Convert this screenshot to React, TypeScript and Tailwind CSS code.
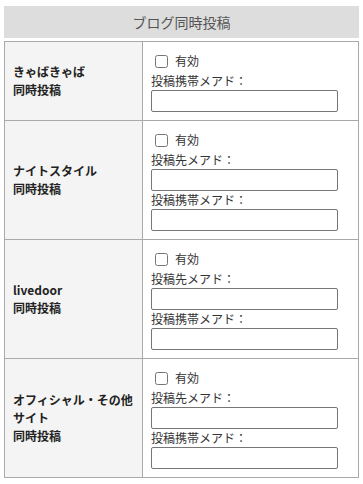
const font = { fontFamily: '"Noto Sans CJK JP", "Noto Sans", sans-serif' }

type Site = {
  name: React.ReactNode
  pcMail: boolean
}

const sites: Site[] = [
  { name: 'きゃばきゃば', pcMail: false },
  { name: 'ナイトスタイル', pcMail: true },
  { name: 'livedoor', pcMail: true },
  { name: 'オフィシャル・その他サイト', pcMail: true },
]

function MailField({ label }: { label: string }) {
  return (
    <>
      <div className="h-[18px] leading-[18px]">{label}</div>
      <input
        type="text"
        className="block w-[187px] h-[22px] border border-[#767676] rounded-[2px] bg-white"
      />
    </>
  )
}

export default function App() {
  return (
    <div className="w-[363px] px-[4px] pt-[6px] text-[12px] text-[#333] bg-white" style={font}>
      <div className="h-[32px] flex items-center justify-center bg-[#dddddd] text-[14px] text-[#555]">
        ブログ同時投稿
      </div>
      <div className="mt-[3px] border-l border-r border-t border-[#aaaaaa]">
        {sites.map((site, i) => (
          <div key={i} className="flex border-b border-[#aaaaaa]">
            <div className="w-[138px] shrink-0 flex items-center px-[8px] bg-[#f4f4f4] border-r border-[#aaaaaa] font-bold text-[#222] leading-[18px]">
              <div>
                {site.name}
                <br />
                同時投稿
              </div>
            </div>
            <div className="flex-1 pl-[8px] py-[8px]">
              <label className="h-[22px] flex items-center">
                <input type="checkbox" className="ml-[4px] w-[13px] h-[13px]" />
                <span className="ml-[7px]">有効</span>
              </label>
              {site.pcMail && <MailField label="投稿先メアド：" />}
              <MailField label="投稿携帯メアド：" />
            </div>
          </div>
        ))}
      </div>
    </div>
  )
}
